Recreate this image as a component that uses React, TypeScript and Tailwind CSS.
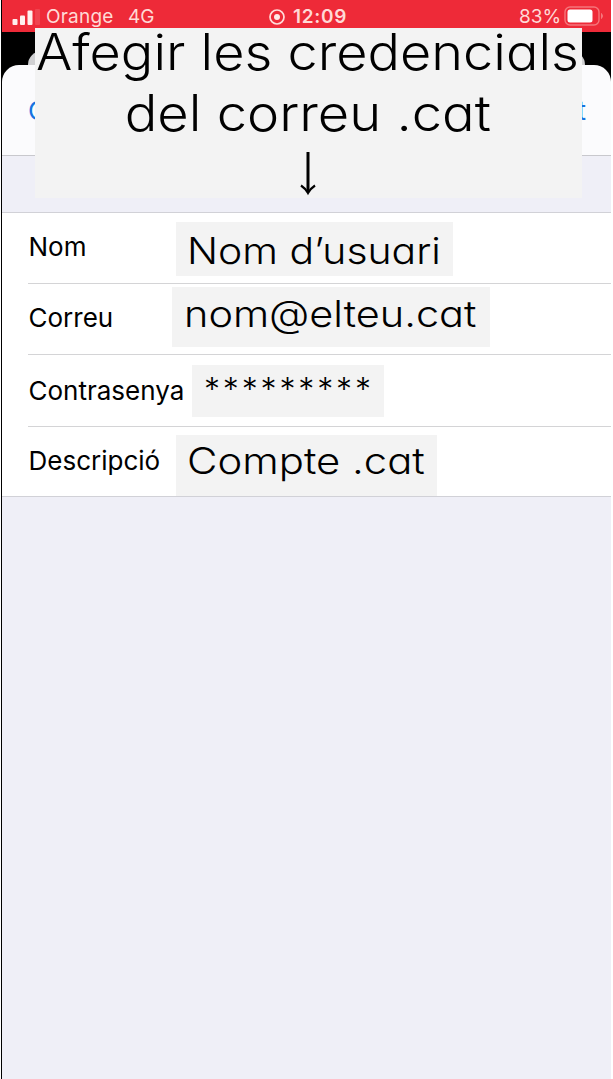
import React from "react";

type Field = {
  label: string;
  value: string;
  row: string;
  labelClass: string;
  box: string;
  text: string;
};

const fields: Field[] = [
  {
    label: "Nom",
    value: "Nom d’usuari",
    row: "h-[70px]",
    labelClass: "pt-[18px]",
    box: "left-[173.5px] top-[9px] h-[54px] w-[277px] pl-[11.5px] pt-[4px]",
    text: "text-[37px] scale-x-[1.105]",
  },
  {
    label: "Correu",
    value: "nom@elteu.cat",
    row: "h-[71px] border-t border-[#d4d4d6]",
    labelClass: "pt-[18px]",
    box: "left-[169.5px] top-[3px] h-[60px] w-[318px] pl-[12px] pt-[2px]",
    text: "text-[37px] scale-x-[1.12]",
  },
  {
    label: "Contrasenya",
    value: "*********",
    row: "h-[72px] border-t border-[#d4d4d6]",
    labelClass: "pt-[20px]",
    box: "left-[190px] top-[10px] h-[52px] w-[192px] pl-[12px]",
    text: "text-[32px] tracking-[2.85px]",
  },
  {
    label: "Descripció",
    value: "Compte .cat",
    row: "h-[70px] border-t border-[#d4d4d6]",
    labelClass: "pt-[18px]",
    box: "left-[173.5px] top-[8px] h-[61px] w-[261.5px] pl-[11.5px] pt-[1px]",
    text: "text-[37px] scale-x-[1.13]",
  },
];

function StatusBar() {
  return (
    <div className="flex h-8 shrink-0 items-start bg-[#ee2a38] pt-[5px] text-[19px] leading-[23px] text-[#ffd9d6]">
      <svg className="ml-[10px] mt-[4px] h-4 w-[28px] shrink-0" viewBox="0 0 28 16">
        <rect x="0.5" y="10" width="5" height="6" rx="1" fill="#fff0ee" />
        <rect x="8" y="6.5" width="5" height="9.5" rx="1" fill="#fff0ee" />
        <rect x="15.5" y="1.5" width="5" height="14.5" rx="1" fill="#fff0ee" />
        <rect x="23" y="0" width="5" height="16" rx="1" fill="#f0434f" />
      </svg>
      <span className="ml-[6px] w-[82px] tracking-[0.2px]">Orange</span>
      <span className="w-[141px]">4G</span>
      <svg className="mt-[4px] h-4 w-4 shrink-0" viewBox="0 0 16 16">
        <circle cx="8" cy="8" r="7" fill="none" stroke="#ffdcd9" strokeWidth="1.7" />
        <circle cx="8" cy="8" r="3" fill="#ffe9e6" />
      </svg>
      <span className="ml-[8px] w-[226px] font-semibold tracking-[0.7px]">12:09</span>
      <span className="w-[45px]">83%</span>
      <svg className="mt-[1px] h-5 w-[42px] shrink-0" viewBox="0 0 42 20">
        <rect x="1" y="1" width="34" height="18" rx="5" fill="none" stroke="#f5767b" strokeWidth="1.4" />
        <rect x="3.5" y="3.5" width="25" height="13" rx="2.5" fill="#fff" />
        <path d="M37.5 7.5Q39.5 10 37.5 12.5Z" fill="#f5767b" stroke="#f5767b" />
      </svg>
    </div>
  );
}

function Heading() {
  return (
    <h1 className="absolute left-[33px] top-[28px] flex h-[170px] w-[546.5px] flex-col items-center whitespace-nowrap bg-[#f3f3f3] text-[50px] font-[340] leading-[61px] text-black [font-feature-settings:'cv11']">
      <span className="mr-[2px] scale-x-[1.08] leading-[49px]">Afegir les credencials</span>
      <span className="mr-[1px] mt-[6px] scale-x-[1.085]">del correu .cat</span>
      <svg className="mt-[8px] h-[44px] w-[20px]" viewBox="0 0 20 44" fill="none" stroke="#000">
        <path d="M10 0V40" strokeWidth="3" />
        <path d="M3 33.5Q7.5 36.5 10 41Q12.5 36.5 17 33.5" strokeWidth="2.2" />
      </svg>
    </h1>
  );
}

export default function App() {
  return (
    <div className="h-[1079px] w-[613px] overflow-hidden bg-white pr-[2px] font-['Inter',sans-serif]">
      <div className="ml-px flex h-full border-l border-black">
        <div className="relative flex h-full w-[609px] flex-col bg-[#efeff7]">
          <StatusBar />
          <div className="flex h-[33px] shrink-0 items-end bg-black px-[26px]">
            <div className="h-[14px] w-full rounded-t-[14px] bg-[#d0d0d2]" />
          </div>
          <div className="shrink-0 bg-black">
            <nav className="flex h-[91px] justify-between rounded-t-[17px] border-b border-[#c8c8cd] bg-[#fbfbfd] pl-[26px] pr-[25px] pt-[29px] text-[26px] leading-[34px] text-[#1673e0]">
              <span>Cancel·la</span>
              <span>Següent</span>
            </nav>
          </div>
          <main className="mt-[56px] border-y border-[#d1d1d7] bg-white">
            {fields.map((f) => (
              <div key={f.label} className="pl-[26px]">
                <div className={`relative ${f.row}`}>
                  <label className={`block pl-[0.5px] text-[26px] leading-[32px] text-black ${f.labelClass}`}>
                    {f.label}
                  </label>
                  <div
                    className={`absolute -ml-[26px] whitespace-nowrap bg-[#f3f3f3] font-light leading-[50px] text-black [font-feature-settings:'cv11'] ${f.box}`}
                  >
                    <span className={`inline-block origin-left ${f.text}`}>{f.value}</span>
                  </div>
                </div>
              </div>
            ))}
          </main>
          <Heading />
        </div>
      </div>
    </div>
  );
}
